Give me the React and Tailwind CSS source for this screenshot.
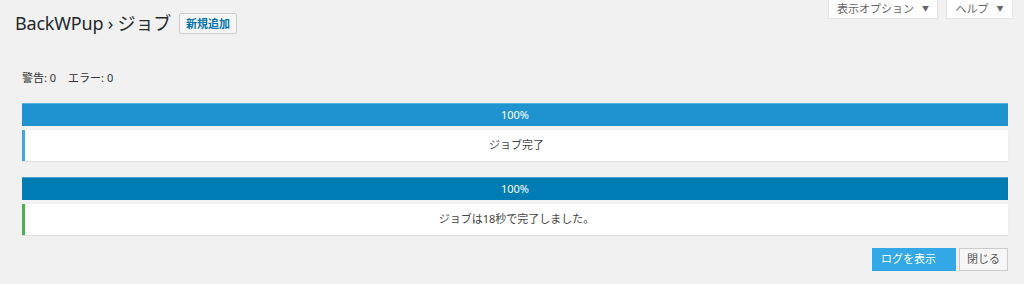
import React from "react";

const font = { fontFamily: '"Noto Sans", "Noto Sans CJK JP", sans-serif' };

const ProgressBlock = ({ barClass, borderClass, message }) => (
  <div className="flex flex-col gap-[4px]">
    <div
      className={`h-[23px] flex items-center justify-center text-white text-[11px] ${barClass}`}
    >
      100%
    </div>
    <div
      className={`h-[31px] bg-white border-l-[3px] shadow-[0_1px_1px_rgba(0,0,0,0.06)] flex items-center justify-center text-[11px] text-[#444] ${borderClass}`}
    >
      {message}
    </div>
  </div>
);

const App = () => {
  return (
    <div className="w-[1024px] h-[284px] bg-[#f1f1f1] overflow-hidden relative" style={font}>
      {/* screen options / help tabs */}
      <div className="absolute top-0 right-[11px] flex gap-[8px]">
        <div className="h-[19px] w-[110px] bg-white border border-t-0 border-[#e5e5e5] flex items-center justify-center gap-[8px] text-[11px] text-[#666]">
          表示オプション <span className="text-[7px]">▼</span>
        </div>
        <div className="h-[19px] w-[67px] bg-white border border-t-0 border-[#e5e5e5] flex items-center justify-center gap-[8px] text-[11px] text-[#666]">
          ヘルプ <span className="text-[7px]">▼</span>
        </div>
      </div>

      <div className="pl-[15px] pt-[11px] flex items-center gap-[8px]">
        <h1 className="text-[18px] tracking-[-0.2px] text-[#23282d] leading-[24px]">BackWPup › ジョブ</h1>
        <button className="h-[21px] px-[6px] bg-[#f7f7f7] border border-[#ccc] rounded-[2px] text-[11px] font-semibold text-[#0073aa] leading-none">
          新規追加
        </button>
      </div>

      <div className="pl-[22px] pr-[16px] mt-[36px]">
        <p className="text-[11px] text-[#333] leading-[14px]">
          警告: 0<span className="ml-[12px]">エラー: 0</span>
        </p>

        <div className="mt-[18px] flex flex-col gap-[16px]">
          <ProgressBlock
            barClass="bg-[#1e93d0] border-t border-[#5ab4e0]"
            borderClass="border-[#3aa8e6]"
            message="ジョブ完了"
          />
          <ProgressBlock
            barClass="bg-[#007cb4] border-t border-[#4aa0cc]"
            borderClass="border-[#46b450]"
            message="ジョブは18秒で完了しました。"
          />
        </div>

        <div className="mt-[13px] flex justify-end gap-[3px]">
          <button className="h-[23px] w-[84px] bg-[#32a9e6] text-white text-[11px] text-left pl-[9px]">
            ログを表示
          </button>
          <button className="h-[23px] w-[49px] bg-[#f7f7f7] border border-[#ccc] text-[11px] text-[#555]">
            閉じる
          </button>
        </div>
      </div>
    </div>
  );
};

export default App;
